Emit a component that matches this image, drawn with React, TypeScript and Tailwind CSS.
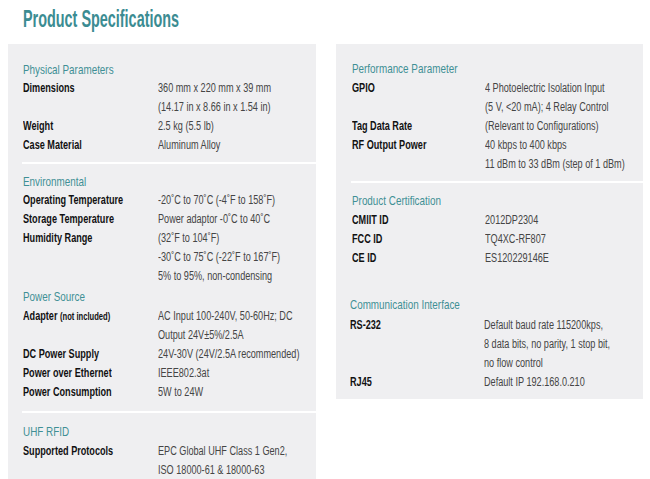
import React from "react";

type Row = { label: React.ReactNode; values: string[] };
type Section = { title: string; rows: Row[] };

const body = { fontFamily: '"Liberation Sans", Arial, sans-serif' };

function N({ children, className = "" }: { children: React.ReactNode; className?: string }) {
  return <span className={`inline-block origin-left scale-x-[0.76] whitespace-nowrap ${className}`}>{children}</span>;
}

function SectionBlock({ s, labelW, gap = "" }: { s: Section; labelW: string; gap?: string }) {
  return (
    <div>
      <div className={`text-[13px] leading-[19px] text-[#3f8f95] ${gap}`}>
        <N>{s.title}</N>
      </div>
      {s.rows.map((r, i) => (
        <div key={i} className="flex">
          <div className={`${labelW} shrink-0 font-bold text-[12px] leading-[19px] text-[#111]`}>
            <N>{r.label}</N>
          </div>
          <div>
            {r.values.map((v, j) => (
              <div key={j} className="text-[12px] leading-[19px] text-[#454545]">
                <N>{v}</N>
              </div>
            ))}
          </div>
        </div>
      ))}
    </div>
  );
}

const physical: Section = {
  title: "Physical Parameters",
  rows: [
    { label: "Dimensions", values: ["360 mm x 220 mm x 39 mm", "(14.17 in x 8.66 in x 1.54 in)"] },
    { label: "Weight", values: ["2.5 kg (5.5 lb)"] },
    { label: "Case Material", values: ["Aluminum Alloy"] },
  ],
};
const env: Section = {
  title: "Environmental",
  rows: [
    { label: "Operating Temperature", values: ["-20˚C to 70˚C (-4˚F to 158˚F)"] },
    { label: "Storage Temperature", values: ["Power adaptor -0˚C to 40˚C"] },
    { label: "Humidity Range", values: ["(32˚F to 104˚F)", "-30˚C to 75˚C (-22˚F to 167˚F)", "5% to 95%, non-condensing"] },
  ],
};
const power: Section = {
  title: "Power Source",
  rows: [
    {
      label: (
        <>
          Adapter <span className="text-[10px]">(not included)</span>
        </>
      ),
      values: ["AC Input 100-240V, 50-60Hz; DC", "Output 24V±5%/2.5A"],
    },
    { label: "DC Power Supply", values: ["24V-30V (24V/2.5A recommended)"] },
    { label: "Power over Ethernet", values: ["IEEE802.3at"] },
    { label: "Power Consumption", values: ["5W to 24W"] },
  ],
};
const uhf: Section = {
  title: "UHF RFID",
  rows: [{ label: "Supported Protocols", values: ["EPC Global UHF Class 1 Gen2,", "ISO 18000-61 & 18000-63"] }],
};
const perf: Section = {
  title: "Performance Parameter",
  rows: [
    { label: "GPIO", values: ["4 Photoelectric Isolation Input", "(5 V, <20 mA); 4 Relay Control"] },
    { label: "Tag Data Rate", values: ["(Relevant to Configurations)"] },
    { label: "RF Output Power", values: ["40 kbps to 400 kbps", "11 dBm to 33 dBm (step of 1 dBm)"] },
  ],
};
const cert: Section = {
  title: "Product Certification",
  rows: [
    { label: "CMIIT ID", values: ["2012DP2304"] },
    { label: "FCC ID", values: ["TQ4XC-RF807"] },
    { label: "CE ID", values: ["ES120229146E"] },
  ],
};
const comm: Section = {
  title: "Communication Interface",
  rows: [
    { label: "RS-232", values: ["Default baud rate 115200kps,", "8 data bits, no parity, 1 stop bit,", "no flow control"] },
    { label: "RJ45", values: ["Default IP 192.168.0.210"] },
  ],
};

export default function App() {
  return (
    <div className="w-[650px] h-[479px] bg-white overflow-hidden" style={body}>
      <div className="pl-[23px] pt-[3px] h-[44px]">
        <h1 className="inline-block origin-left scale-x-[0.6] text-[24px] leading-[32px] font-bold text-[#3b8c92] whitespace-nowrap">
          Product Specifications
        </h1>
      </div>
      <div className="flex items-start pl-[8px] gap-[20px]">
        <div className="w-[308px] h-[440px] bg-[#efeff1] pt-[16px]">
          <div className="pl-[15px] pb-[7px]">
            <SectionBlock s={physical} labelW="w-[135px]" />
          </div>
          <div className="ml-[14px] h-[2px] bg-white" />
          <div className="pl-[15px] pt-[8px]">
            <SectionBlock s={env} labelW="w-[135px]" />
          </div>
          <div className="pl-[15px] pt-[1px] pb-[9px]">
            <SectionBlock s={power} labelW="w-[135px]" gap="mb-[1px]" />
          </div>
          <div className="ml-[14px] h-[2px] bg-white" />
          <div className="pl-[15px] pt-[9px]">
            <SectionBlock s={uhf} labelW="w-[135px]" gap="mb-[1px]" />
          </div>
        </div>
        <div className="w-[307px] h-[355px] bg-[#efeff1] pt-[15px]">
          <div className="pl-[16px] pb-[7px]">
            <SectionBlock s={perf} labelW="w-[133px]" gap="mb-[1px]" />
          </div>
          <div className="ml-[15px] h-[2px] bg-white" />
          <div className="pl-[16px] pt-[8px]">
            <SectionBlock s={cert} labelW="w-[133px]" gap="mb-[1px]" />
          </div>
          <div className="pl-[14px] pt-[27px]">
            <SectionBlock s={comm} labelW="w-[134px]" gap="mb-[2px]" />
          </div>
        </div>
      </div>
    </div>
  );
}
